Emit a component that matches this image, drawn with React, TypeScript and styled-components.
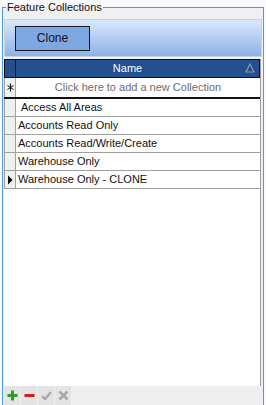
import styled, { createGlobalStyle } from 'styled-components';

const GlobalStyle = createGlobalStyle`
  html, body {
    margin: 0;
    padding: 0;
    background: #f7f9fc;
    font-family: "Liberation Sans", Arial, sans-serif;
    font-size: 11px;
  }
`;

const collections = [
  { name: 'Access All Areas', editing: true },
  { name: 'Accounts Read Only' },
  { name: 'Accounts Read/Write/Create' },
  { name: 'Warehouse Only' },
  { name: 'Warehouse Only - CLONE', current: true },
];

export default function App() {
  return (
    <>
      <GlobalStyle />
      <Page>
        <GroupBox>
          <Legend>Feature Collections</Legend>
          <Content>
            <Toolbar>
              <CloneButton>Clone</CloneButton>
            </Toolbar>
            <Grid>
              <HeaderRow>
                <HeaderIndicator />
                <HeaderCell>
                  Name
                  <SortGlyph width="10" height="10" viewBox="0 0 10 10">
                    <path d="M5 1 L9 9 L1 9 Z" fill="none" stroke="#8c94a8" strokeWidth="1.2" />
                  </SortGlyph>
                </HeaderCell>
              </HeaderRow>
              <NewRow>
                <Indicator>
                  <svg width="7" height="9" viewBox="0 0 7 9">
                    <path d="M3.5 0.5 V8.5 M0.5 2.5 L6.5 6.5 M6.5 2.5 L0.5 6.5" stroke="#111" strokeWidth="1" />
                  </svg>
                </Indicator>
                <NewCell>Click here to add a new Collection</NewCell>
              </NewRow>
              {collections.map((c) => (
                <Row key={c.name}>
                  <Indicator>
                    {c.current && (
                      <svg width="6" height="10" viewBox="0 0 6 10">
                        <path d="M1 0.5 L5.5 5 L1 9.5 Z" fill="#000" />
                      </svg>
                    )}
                  </Indicator>
                  <Cell $indent={c.editing ? 5 : 2}>{c.name}</Cell>
                </Row>
              ))}
              <Filler />
            </Grid>
            <Footer>
              <FooterButton title="Add">
                <svg width="11" height="11" viewBox="0 0 11 11">
                  <path d="M5.5 0.5 V10.5 M0.5 5.5 H10.5" stroke="#2f9e26" strokeWidth="3" />
                </svg>
              </FooterButton>
              <FooterButton title="Remove">
                <svg width="11" height="11" viewBox="0 0 11 11">
                  <path d="M0.5 5.5 H10.5" stroke="#d21f1f" strokeWidth="3" />
                </svg>
              </FooterButton>
              <FooterButton title="Accept">
                <svg width="11" height="11" viewBox="0 0 11 11">
                  <path d="M1 6 L4 9 L10 2" fill="none" stroke="#a9a9a9" strokeWidth="2.4" />
                </svg>
              </FooterButton>
              <FooterButton title="Cancel">
                <svg width="11" height="11" viewBox="0 0 11 11">
                  <path d="M1.5 1.5 L9.5 9.5 M9.5 1.5 L1.5 9.5" stroke="#a9a9a9" strokeWidth="2.6" />
                </svg>
              </FooterButton>
            </Footer>
          </Content>
        </GroupBox>
      </Page>
    </>
  );
}

const Page = styled.div`
  width: 266px;
  height: 405px;
  padding: 0 2px 0 2px;
  box-sizing: border-box;
  overflow: hidden;
`;

const GroupBox = styled.fieldset`
  margin: 0;
  padding: 0 1px;
  min-width: 0;
  border: 1px solid #4f98e6;
  border-bottom: none;
  background: #f0f0f0;
  box-sizing: border-box;
`;

const Legend = styled.legend`
  margin-left: 2px;
  padding: 0 1px;
  height: 14px;
  line-height: 14px;
  font-size: 11px;
  color: #111;
`;

const Content = styled.div`
  display: flex;
  flex-direction: column;
  height: 391px;
  padding-top: 5px;
  box-sizing: border-box;
`;

const Toolbar = styled.div`
  display: flex;
  align-items: center;
  height: 38px;
  padding: 0 10px;
  box-sizing: border-box;
  border: 1px solid #c9d3e0;
  background: linear-gradient(#dbe8fb, #8bb2e8);
`;

const CloneButton = styled.button`
  width: 75px;
  height: 25px;
  margin: 0;
  padding: 0;
  border: 1px solid #1a1a1a;
  background: #7ea7e1;
  font-family: "Liberation Sans", Arial, sans-serif;
  font-size: 12px;
  color: #111;
`;

const Grid = styled.div`
  flex: 1;
  display: flex;
  flex-direction: column;
  margin-top: 2px;
  margin-right: 1px;
  background: #fff;
  border-right: 1px solid #a0a0a0;
`;

const HeaderRow = styled.div`
  display: flex;
  height: 19px;
  background: #24508f;
  border: 1px solid #111;
  box-sizing: border-box;
`;

const HeaderIndicator = styled.div`
  width: 10px;
  border-right: 1px solid #111;
`;

const HeaderCell = styled.div`
  position: relative;
  flex: 1;
  padding-right: 20px;
  text-align: center;
  line-height: 17px;
  font-size: 11px;
  color: #fff;
`;

const SortGlyph = styled.svg`
  position: absolute;
  right: 4px;
  top: 3px;
`;

const Indicator = styled.div`
  display: flex;
  align-items: center;
  justify-content: center;
  width: 10px;
  background: #f0f0f0;
  border-right: 1px solid #a0a0a0;
  border-left: 1px solid #a0a0a0;
`;

const NewRow = styled.div`
  display: flex;
  height: 19px;
  border-bottom: 2px solid #111;
`;

const NewCell = styled.div`
  flex: 1;
  text-align: center;
  line-height: 19px;
  color: #6d6d6d;
`;

const Row = styled.div`
  display: flex;
  height: 18px;
  border-bottom: 1px solid #a0a0a0;
  box-sizing: border-box;
`;

const Cell = styled.div<{ $indent: number }>`
  flex: 1;
  padding-left: ${(p) => p.$indent}px;
  line-height: 17px;
  color: #111;
  white-space: nowrap;
`;

const Filler = styled.div`
  flex: 1;
`;

const Footer = styled.div`
  display: flex;
  gap: 1px;
  height: 19px;
  background: #efefef;
`;

const FooterButton = styled.div`
  display: flex;
  align-items: center;
  justify-content: center;
  width: 16px;
  background: #e4e4e4;
`;
